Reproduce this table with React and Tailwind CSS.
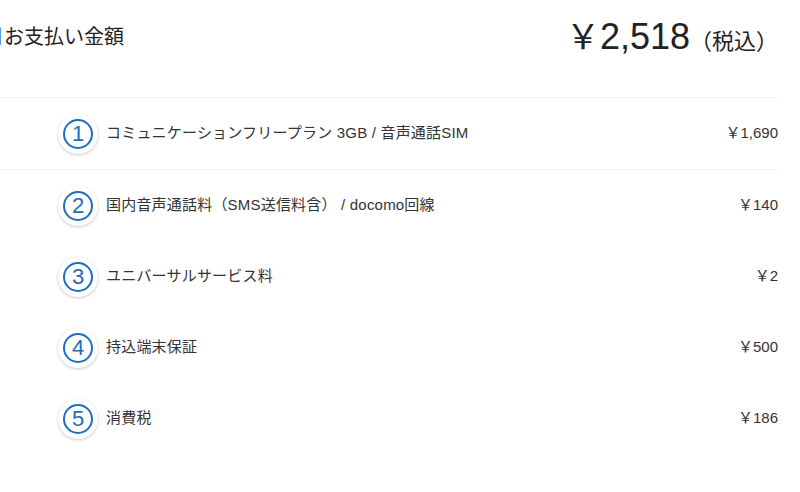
import React from "react";

const items = [
  { no: 1, label: "コミュニケーションフリープラン 3GB / 音声通話SIM", price: "1,690", line: true },
  { no: 2, label: "国内音声通話料（SMS送信料含） / docomo回線", price: "140" },
  { no: 3, label: "ユニバーサルサービス料", price: "2" },
  { no: 4, label: "持込端末保証", price: "500" },
  { no: 5, label: "消費税", price: "186" },
];

function NumBadge({ no }) {
  return (
    <div className="w-10 h-10 rounded-full bg-white flex items-center justify-center shadow-[0_1px_3px_rgba(0,0,0,0.22)]">
      <div className="w-[30px] h-[30px] rounded-full border-2 border-[#1f6cc0] flex items-center justify-center text-[#1f6cc0] text-[22px] leading-none font-['Liberation_Sans',sans-serif]">
        {no}
      </div>
    </div>
  );
}

export default function App() {
  return (
    <div className="w-[800px] h-[492px] bg-white overflow-hidden font-['Liberation_Sans','Noto_Sans_CJK_JP',sans-serif] text-[#333]">
      <div className="w-[778px]">
        {/* header */}
        <div className="h-[98px] flex items-center justify-between border-b border-[#efefef] pb-[24px]">
          <div className="text-[20px] text-[#222] -ml-[16px] whitespace-nowrap">月お支払い金額</div>
          <div className="flex items-baseline text-[#222] whitespace-nowrap">
            <span className="text-[34px]">￥</span>
            <span className="text-[36px]">2,518</span>
            <span className="text-[22px]">（税込）</span>
          </div>
        </div>

        {/* rows */}
        {items.map((it) => (
          <div
            key={it.no}
            className={
              "h-[71px] flex items-center pl-[58px] " +
              (it.line ? "h-[72px] border-b border-[#efefef]" : "")
            }
          >
            <NumBadge no={it.no} />
            <div className="ml-2 text-[15px] tracking-[0.2px] flex-1 whitespace-nowrap">{it.label}</div>
            <div className="text-[15px] whitespace-nowrap">
              <span>￥</span>
              {it.price}
            </div>
          </div>
        ))}
      </div>
    </div>
  );
}
